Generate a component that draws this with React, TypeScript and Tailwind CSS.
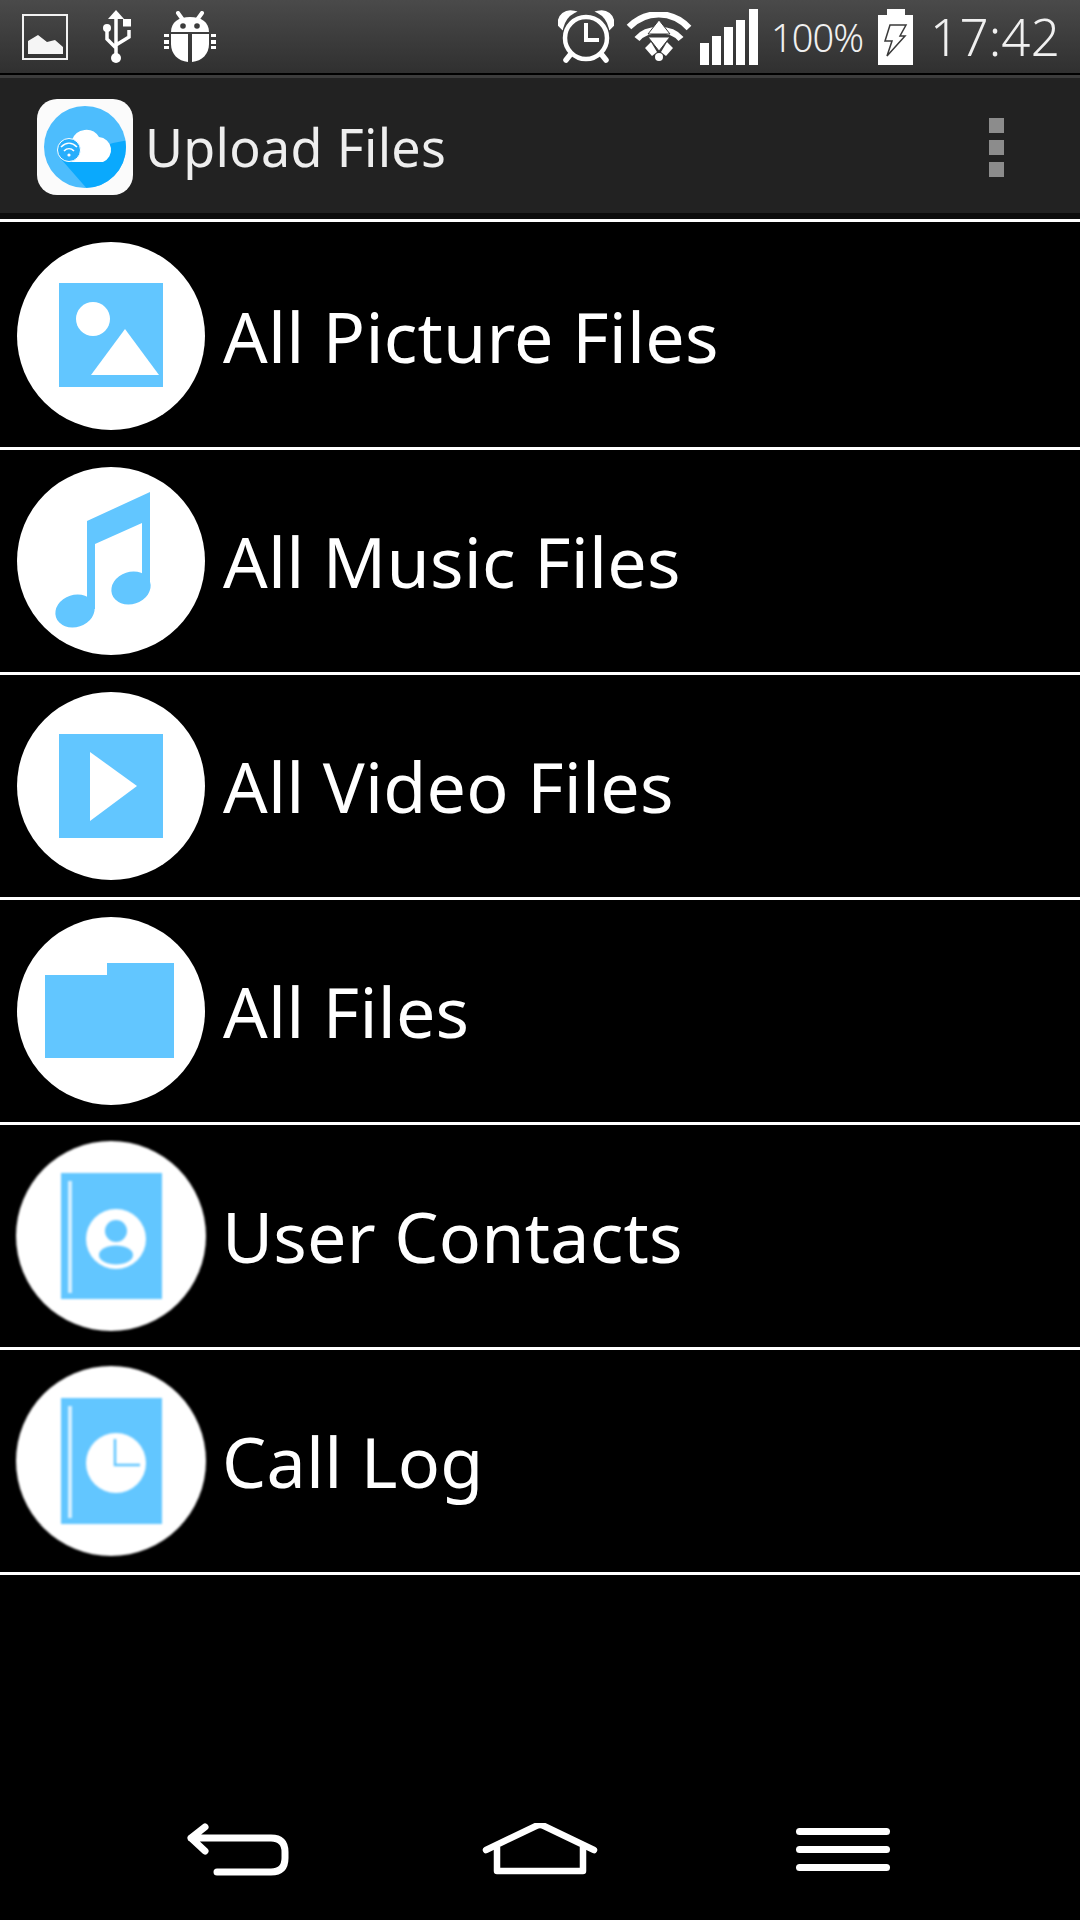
const BLUE = '#62c6ff';

function PictureStatusIcon() {
  return (
    <svg width="46" height="46" viewBox="0 0 46 46" className="shrink-0">
      <rect x="1" y="1" width="44" height="44" fill="none" stroke="#f2f2f2" strokeWidth="2" />
      <path d="M6 40V27L16 21L25 28L33 26L41 33V40Z" fill="#f5f5f5" />
    </svg>
  );
}

function UsbIcon() {
  return (
    <svg width="30" height="54" viewBox="0 0 30 54" className="shrink-0">
      <path d="M14 0L22 9H6Z" fill="white" />
      <path d="M14 8V48M5 18V29L14 38M27 20V27L14 35" fill="none" stroke="white" strokeWidth="3.5" />
      <circle cx="5" cy="18" r="4" fill="white" />
      <rect x="21" y="9" width="8" height="7.5" fill="white" />
      <circle cx="14" cy="48" r="5" fill="white" />
    </svg>
  );
}

function BugIcon() {
  return (
    <svg width="52" height="52" viewBox="0 0 52 52" className="shrink-0">
      <path d="M14 2L19 9M38 2L33 9" stroke="white" strokeWidth="4" strokeLinecap="round" />
      <path d="M7 21C7 11 15 6 26 6C37 6 45 11 45 21Z" fill="white" />
      <circle cx="19" cy="15" r="2.8" fill="#3c3c3c" />
      <circle cx="33" cy="15" r="2.8" fill="#3c3c3c" />
      <path d="M7 23H24V51C14 50 7 43 7 33Z" fill="white" />
      <path d="M28 23H45V33C45 43 38 50 28 51Z" fill="white" />
      <path d="M0 23H5V26H0ZM0 29H5V33H0ZM0 35H5V38H0ZM47 23H52V26H47ZM47 29H52V33H47ZM47 35H52V38H47Z" fill="white" />
    </svg>
  );
}

function AlarmIcon() {
  return (
    <svg width="56" height="54" viewBox="0 0 56 54" className="shrink-0">
      <circle cx="28" cy="28" r="21" fill="none" stroke="white" strokeWidth="4.5" />
      <path d="M1 15C0 5 8 0 16 2C10 5 6 10 4 18Z" fill="white" stroke="white" strokeWidth="2.5" />
      <path d="M55 15C56 5 48 0 40 2C46 5 50 10 52 18Z" fill="white" stroke="white" strokeWidth="2.5" />
      <path d="M28 13V30H41" fill="none" stroke="white" strokeWidth="4" />
      <path d="M12 45L8 50M44 45L48 50" stroke="white" strokeWidth="5.5" strokeLinecap="round" />
    </svg>
  );
}

function WifiIcon() {
  return (
    <svg width="66" height="50" viewBox="0 0 66 50" className="shrink-0">
      <path d="M3 15C20 -2 46 -2 63 16" fill="none" stroke="white" strokeWidth="6.5" />
      <path d="M11 27C16 21 23 18 33 18C43 18 50 21 55 27" fill="none" stroke="white" strokeWidth="6.5" />
      <path d="M19 36L25 30L31 40L26 44ZM47 36L41 30L35 40L40 44Z" fill="white" />
      <path d="M33 8L44 22H22Z" fill="white" stroke="#3a3a3a" strokeWidth="1" />
      <path d="M33 39L44 25H22Z" fill="white" stroke="#3a3a3a" strokeWidth="1" />
      <circle cx="33" cy="45" r="4" fill="white" />
    </svg>
  );
}

function SignalIcon() {
  return (
    <svg width="58" height="56" viewBox="0 0 58 56" className="shrink-0">
      <rect x="0" y="34" width="9" height="22" fill="white" />
      <rect x="12" y="27" width="9" height="29" fill="white" />
      <rect x="24" y="18" width="9" height="38" fill="white" />
      <rect x="36" y="11" width="9" height="45" fill="white" />
      <rect x="49" y="0" width="9" height="56" fill="white" />
    </svg>
  );
}

function BatteryIcon() {
  return (
    <svg width="35" height="56" viewBox="0 0 35 56" className="shrink-0">
      <path d="M9 0H27V6H35V56H0V6H9Z" fill="white" />
      <path d="M12 16H28L22 27H27L9 47L14 32H7Z" fill="white" stroke="#3a3a3a" strokeWidth="1.5" />
    </svg>
  );
}

function AppLogo() {
  return (
    <svg width="96" height="96" viewBox="0 0 96 96" className="shrink-0">
      <defs>
        <clipPath id="logo-clip">
          <circle cx="48" cy="48" r="41" />
        </clipPath>
      </defs>
      <rect width="96" height="96" rx="20" fill="#fbfbfb" />
      <circle cx="48" cy="48" r="41" fill="#4dbdfd" />
      <path d="M24 60L52 92L96 92L96 40L76 44Z" fill="#0aa9fd" clipPath="url(#logo-clip)" />
      <path d="M32 63A11 11 0 0 1 35 41A15 15 0 0 1 62 38A13 13 0 0 1 66 63Z" fill="white" />
      <circle cx="32" cy="51" r="11.5" fill="#27aefc" stroke="white" strokeWidth="1" />
      <path d="M24 48C29 43 35 43 40 48M27 52C30 49 34 49 37 52" fill="none" stroke="white" strokeWidth="1.6" />
      <circle cx="32" cy="56" r="1.6" fill="white" />
    </svg>
  );
}

function PictureIcon() {
  return (
    <svg width="188" height="188" viewBox="0 0 188 188" className="blur-[0.5px]">
      <circle cx="94" cy="94" r="94" fill="white" />
      <rect x="42" y="41" width="104" height="104" fill={BLUE} />
      <circle cx="76" cy="77" r="17" fill="white" />
      <path d="M108 87L142 133H74Z" fill="white" />
    </svg>
  );
}

function MusicIcon() {
  return (
    <svg width="188" height="188" viewBox="0 0 188 188" className="blur-[0.5px]">
      <circle cx="94" cy="94" r="94" fill="white" />
      <path d="M133 25V118H125V56L78 77V142H70V54Z" fill={BLUE} />
      <ellipse cx="58" cy="144" rx="20" ry="16" transform="rotate(-18 58 144)" fill={BLUE} />
      <ellipse cx="114" cy="121" rx="20" ry="16" transform="rotate(-18 114 121)" fill={BLUE} />
    </svg>
  );
}

function VideoIcon() {
  return (
    <svg width="188" height="188" viewBox="0 0 188 188" className="blur-[0.5px]">
      <circle cx="94" cy="94" r="94" fill="white" />
      <rect x="42" y="42" width="104" height="104" fill={BLUE} />
      <path d="M73 60L120 94L73 129Z" fill="white" />
    </svg>
  );
}

function FolderIcon() {
  return (
    <svg width="188" height="188" viewBox="0 0 188 188" className="blur-[0.5px]">
      <circle cx="94" cy="94" r="94" fill="white" />
      <path d="M28 58H90V46H157V141H28Z" fill={BLUE} />
    </svg>
  );
}

function ContactsIcon() {
  return (
    <svg width="192" height="192" viewBox="0 0 192 192" className="blur-[1px]">
      <circle cx="96" cy="96" r="95" fill="white" />
      <rect x="46" y="33" width="101" height="126" fill={BLUE} />
      <rect x="53" y="41" width="4" height="112" fill="#d5f0ff" />
      <circle cx="101" cy="99" r="30" fill="white" />
      <circle cx="101" cy="91" r="11" fill={BLUE} />
      <ellipse cx="101" cy="115" rx="17" ry="9.5" fill={BLUE} />
    </svg>
  );
}

function CallLogIcon() {
  return (
    <svg width="192" height="192" viewBox="0 0 192 192" className="blur-[1px]">
      <circle cx="96" cy="96" r="95" fill="white" />
      <rect x="46" y="33" width="101" height="126" fill={BLUE} />
      <rect x="53" y="41" width="4" height="112" fill="#d5f0ff" />
      <circle cx="101" cy="98" r="30" fill="white" />
      <path d="M100 74V100H125" fill="none" stroke={BLUE} strokeWidth="2.5" />
    </svg>
  );
}

const rows = [
  { label: 'All Picture Files', icon: <PictureIcon /> },
  { label: 'All Music Files', icon: <MusicIcon /> },
  { label: 'All Video Files', icon: <VideoIcon /> },
  { label: 'All Files', icon: <FolderIcon /> },
  { label: 'User Contacts', icon: <ContactsIcon /> },
  { label: 'Call Log', icon: <CallLogIcon /> },
];

export default function App() {
  return (
    <div className="flex h-[1920px] w-[1080px] flex-col overflow-hidden bg-black font-['Noto_Sans',sans-serif] text-white">
      {/* status bar */}
      <div className="flex h-[73px] items-center bg-gradient-to-b from-[#4a4a4a] to-[#303030] pr-[20px] pl-[22px]">
        <PictureStatusIcon />
        <div className="ml-[34px]"><UsbIcon /></div>
        <div className="ml-[32px]"><BugIcon /></div>
        <div className="ml-auto"><AlarmIcon /></div>
        <div className="ml-[12px]"><WifiIcon /></div>
        <div className="ml-[8px]"><SignalIcon /></div>
        <span className="ml-[13px] text-[38px] leading-none font-light tracking-[-1px] text-[#f0f0f0]">100%</span>
        <div className="ml-[15px]"><BatteryIcon /></div>
        <span className="ml-[17px] text-[51px] leading-none font-light tracking-[0.2px] text-[#f0f0f0]">17:42</span>
      </div>
      <div className="h-[2px] bg-black" />
      <div className="h-[3px] bg-[#3c3c3c]" />

      {/* action bar */}
      <div className="flex h-[135px] items-center bg-[#222222] pt-[3px] pr-[76px] pl-[37px]">
        <AppLogo />
        <span className="ml-[12px] text-[52px] leading-none tracking-[0.3px] text-[#eeeeee]">Upload Files</span>
        <div className="ml-auto flex flex-col gap-[7px]">
          <div className="h-[15px] w-[15px] bg-[#8c8c8c]" />
          <div className="h-[15px] w-[15px] bg-[#8c8c8c]" />
          <div className="h-[15px] w-[15px] bg-[#8c8c8c]" />
        </div>
      </div>
      <div className="h-[6px] bg-[#0c0c0c]" />
      <div className="h-[3px] bg-white" />

      {/* file list */}
      {rows.map((row, i) => (
        <div
          key={row.label}
          className={`flex h-[225px] items-center border-b-[3px] border-white ${i === 0 ? 'h-[228px] pt-[3px]' : ''} ${i > 3 ? 'pl-[15px]' : 'pl-[17px]'}`}
        >
          {row.icon}
          <span className={`${i > 3 ? 'ml-[15px]' : 'ml-[18px]'} text-[70px] leading-none tracking-[0.2px] text-white`}>{row.label}</span>
        </div>
      ))}

      {/* nav bar */}
      <div className="mt-auto mb-[44px] flex items-center pl-[187px]">
        <svg width="104" height="54" viewBox="0 0 104 54" className="shrink-0">
          <path d="M18 5L4 16L18 29M4 16H84Q98 16 98 30V36Q98 50 84 50H30" fill="none" stroke="white" strokeWidth="7" strokeLinecap="round" strokeLinejoin="round" />
        </svg>
        <svg width="116" height="52" viewBox="0 0 116 52" className="ml-[191px] shrink-0">
          <path d="M4 27L54 3Q58 1 62 3L112 27" fill="none" stroke="white" strokeWidth="6.5" strokeLinecap="round" />
          <path d="M15 24V48H101V24" fill="none" stroke="white" strokeWidth="6.5" strokeLinejoin="round" />
        </svg>
        <div className="ml-[198px] flex w-[94px] flex-col gap-[11px]">
          <div className="h-[7px] rounded-full bg-white" />
          <div className="h-[7px] rounded-full bg-white" />
          <div className="h-[7px] rounded-full bg-white" />
        </div>
      </div>
    </div>
  );
}
